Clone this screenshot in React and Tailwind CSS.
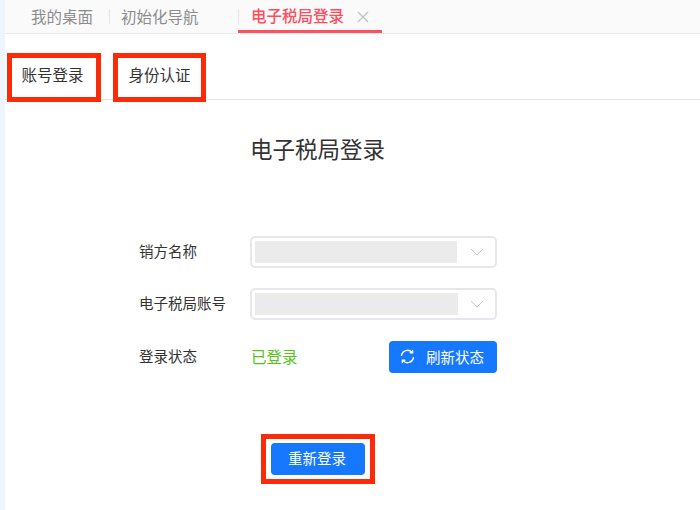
import React from "react";

const font = { fontFamily: '"Noto Sans CJK SC", "Liberation Sans", sans-serif' };

function Chevron() {
  return (
    <svg width="14" height="8" viewBox="0 0 14 8" fill="none" stroke="#c8c9cc" strokeWidth="1">
      <path d="M1 1l6 6 6-6" />
    </svg>
  );
}

function Select({ barW, gap }) {
  return (
    <div className="flex h-8 w-[247px] items-center rounded-[5px] border-2 border-[#e6e7ee] pl-[3px]">
      <div className={`h-[22px] bg-[#ebebeb] ${barW}`} />
      <div className={gap}><Chevron /></div>
    </div>
  );
}

function Refresh() {
  return (
    <svg width="15" height="15" viewBox="0 0 15 15" fill="none" stroke="#fff" strokeWidth="1.4" strokeLinecap="round">
      <path d="M1.6 6.2A6 6 0 0 1 12 3.4" />
      <path d="M13.4 8.8A6 6 0 0 1 3 11.6" />
      <path d="M12.6 1.4v2.4h-2.4" />
      <path d="M2.4 13.6v-2.4h2.4" />
    </svg>
  );
}

export default function App() {
  return (
    <div className="flex h-[510px] w-[700px] overflow-hidden bg-white" style={font}>
      <div className="h-full w-[5px] shrink-0 bg-[#eff5fe]" />
      <div className="flex min-w-0 flex-1 flex-col">
        <div className="flex h-[34px] items-stretch border-b border-[#ebebeb] bg-[#fafafa] pl-[26px] text-[15.5px] leading-[33px] text-[#8c8c8c]">
          <div className="w-[78px]">我的桌面</div>
          <div className="my-[9px] w-px bg-[#e4e4e4]" />
          <div className="ml-[11px] w-[117px]">初始化导航</div>
          <div className="relative flex w-[144px] items-center border-b-[3px] border-[#ff5060] pl-[13px] font-medium text-[#ff4d5e]">
            <div className="absolute left-0 top-[9px] h-[16px] w-px bg-[#e4e4e4]" />
            <span>电子税局登录</span>
            <svg className="ml-[13px] mt-[3px]" width="12" height="12" viewBox="0 0 12 12" stroke="#c4c4c4" strokeWidth="1.4">
              <path d="M1 1l10 10M11 1L1 11" />
            </svg>
          </div>
        </div>
        <div className="flex h-[66px] items-end border-b border-[#e5e5e5] pl-[2px] text-[15.5px] leading-[22px] text-[#333]">
          <div className="mb-[-3px] flex h-[49px] w-[94px] items-center justify-center border-[5px] border-[#fb2a08] pb-[7px] pr-[3px]">账号登录</div>
          <div className="mb-[-3px] ml-3 flex h-[49px] w-[93px] items-center justify-center border-[5px] border-[#fb2a08] pb-[7px]">身份认证</div>
        </div>
        <div className="flex flex-1 flex-col pl-[134px]">
          <h1 className="mt-[32px] ml-[111px] text-[22.5px] leading-[32px] text-[#333]">电子税局登录</h1>
          <div className="mt-[72px] flex h-8 items-center text-[14.5px] leading-[28px] text-[#333]">
            <div className="w-[111px] pb-[2px]">销方名称</div>
            <Select barW="w-[202px]" gap="ml-[13px]" />
          </div>
          <div className="mt-[20px] flex h-8 items-center text-[14.5px] leading-[28px] text-[#333]">
            <div className="w-[111px] pb-[2px]">电子税局账号</div>
            <Select barW="w-[203px]" gap="ml-[12px]" />
          </div>
          <div className="mt-[21px] flex h-8 items-center text-[14.5px] leading-[28px] text-[#333]">
            <div className="w-[112px] pb-[2px]">登录状态</div>
            <div className="w-[138px] pb-[2px] text-[15.5px] text-[#52c41a]">已登录</div>
            <button className="flex h-8 w-[108px] items-center justify-center gap-[11px] rounded-[4px] bg-[#1677ff] pb-[1px] pr-[2px] text-[14.5px] text-white">
              <Refresh />
              刷新状态
            </button>
          </div>
          <div className="mt-[61px] ml-[122px] flex h-[50px] w-[114px] items-center justify-center border-[5px] border-[#fb2a08]">
            <button className="h-8 w-[94px] rounded-[4px] bg-[#1677ff] pb-[2px] pr-[2px] text-[14.5px] text-white">重新登录</button>
          </div>
        </div>
      </div>
    </div>
  );
}
